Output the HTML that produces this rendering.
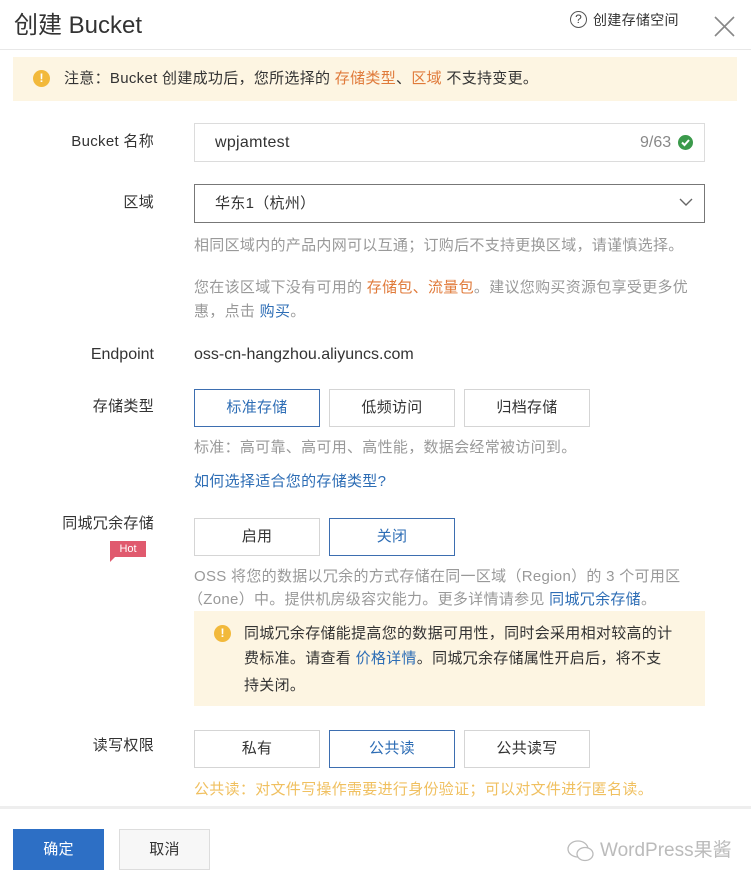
<!DOCTYPE html>
<html><head><meta charset="utf-8"><style>
*{margin:0;padding:0;box-sizing:border-box}
body{width:751px;height:876px;background:#fff;position:relative;overflow:hidden;font-family:"Liberation Sans","Noto Sans CJK SC",sans-serif;color:#333;font-size:15px;letter-spacing:0.3px}
.a{position:absolute;white-space:nowrap}
.lbl{position:absolute;right:597px;white-space:nowrap;font-size:15px;color:#333;line-height:20px}
.btn{position:absolute;height:38px;width:126px;border:1px solid #d5d5d5;background:#fff;text-align:center;line-height:36px;font-size:15px;color:#333}
.sel{border:1px solid #3d6eb0;color:#2d6db5}
.gray{color:#999;font-size:15px;line-height:20px}
.blue{color:#2d6db5}
.org{color:#e07a3a}
.warn{position:absolute;width:17px;height:17px;border-radius:50%;background:#f2b93b;color:#fff;font-size:12px;font-weight:bold;text-align:center;line-height:17px;letter-spacing:0}
</style></head><body>
<div class="a" style="left:14px;top:5px;font-size:24px;color:#333;letter-spacing:0">创建 Bucket</div>
<div class="a" style="left:570px;top:11px;width:17px;height:17px;border:1px solid #555;border-radius:50%;font-size:12px;text-align:center;line-height:15px;color:#444;letter-spacing:0">?</div>
<div class="a" style="left:593px;top:10px;font-size:14px;color:#333">创建存储空间</div>
<svg class="a" style="left:714px;top:16px" width="21" height="21" viewBox="0 0 21 21"><path d="M1 1L20 20M20 1L1 20" stroke="#888" stroke-width="1.6"/></svg>
<div class="a" style="left:0;top:49px;width:751px;height:1px;background:#e8e8e8"></div>
<div class="a" style="left:13px;top:57px;width:724px;height:44px;background:#fdf5e2"></div>
<div class="warn" style="left:33px;top:70px">!</div>
<div class="a" style="left:64px;top:69px;line-height:20px">注意：Bucket 创建成功后，您所选择的 <span class="org">存储类型</span>、<span class="org">区域</span> 不支持变更。</div>

<div class="lbl" style="top:132px">Bucket 名称</div>
<div class="a" style="left:194px;top:123px;width:511px;height:39px;border:1px solid #dcdcdc"></div>
<div class="a" style="left:215px;top:133px;font-size:16px;line-height:20px">wpjamtest</div>
<div class="a" style="left:640px;top:133px;font-size:16px;line-height:20px;color:#888;letter-spacing:0">9/63</div>
<div class="a" style="left:678px;top:135px;width:15px;height:15px;border-radius:50%;background:#3b9a4b"></div>
<svg class="a" style="left:678px;top:135px" width="15" height="15"><path d="M4 7.5L6.5 10L11 5" stroke="#fff" stroke-width="2" fill="none"/></svg>

<div class="lbl" style="top:193px">区域</div>
<div class="a" style="left:194px;top:184px;width:511px;height:39px;border:1px solid #777"></div>
<div class="a" style="left:215px;top:194px;font-size:15px;line-height:20px">华东1（杭州）</div>
<svg class="a" style="left:679px;top:198px" width="14" height="9"><path d="M1 1L7 7L13 1" stroke="#666" stroke-width="1.4" fill="none"/></svg>
<div class="a gray" style="left:194px;top:236px">相同区域内的产品内网可以互通；订购后不支持更换区域，请谨慎选择。</div>
<div class="a gray" style="left:194px;top:278px">您在该区域下没有可用的 <span class="org">存储包、流量包</span>。建议您购买资源包享受更多优</div>
<div class="a gray" style="left:194px;top:302px">惠，点击 <span class="blue">购买</span>。</div>

<div class="lbl" style="top:345px;font-size:16px;letter-spacing:0">Endpoint</div>
<div class="a" style="left:194px;top:345px;font-size:16px;line-height:20px;letter-spacing:0">oss-cn-hangzhou.aliyuncs.com</div>

<div class="lbl" style="top:397px">存储类型</div>
<div class="btn sel" style="left:194px;top:389px">标准存储</div>
<div class="btn" style="left:329px;top:389px">低频访问</div>
<div class="btn" style="left:464px;top:389px">归档存储</div>
<div class="a gray" style="left:194px;top:438px">标准：高可靠、高可用、高性能，数据会经常被访问到。</div>
<div class="a blue" style="left:194px;top:472px;line-height:20px">如何选择适合您的存储类型?</div>

<div class="lbl" style="top:514px">同城冗余存储</div>
<div class="a" style="left:110px;top:541px;width:36px;height:16px;background:#e05a6e;color:#fff;font-size:11px;text-align:center;line-height:16px;letter-spacing:0">Hot</div>
<div class="a" style="left:110px;top:557px;width:0;height:0;border-top:5px solid #e05a6e;border-right:5px solid transparent"></div>
<div class="btn" style="left:194px;top:518px">启用</div>
<div class="btn sel" style="left:329px;top:518px">关闭</div>
<div class="a gray" style="left:194px;top:567px">OSS 将您的数据以冗余的方式存储在同一区域（Region）的 3 个可用区</div>
<div class="a gray" style="left:188px;top:590px">（Zone）中。提供机房级容灾能力。更多详情请参见 <span class="blue">同城冗余存储</span>。</div>
<div class="a" style="left:194px;top:611px;width:511px;height:95px;background:#fdf5e2"></div>
<div class="warn" style="left:214px;top:625px">!</div>
<div class="a" style="left:244px;top:624px;line-height:20px">同城冗余存储能提高您的数据可用性，同时会采用相对较高的计</div>
<div class="a" style="left:244px;top:649px;line-height:20px">费标准。请查看 <span class="blue">价格详情</span>。同城冗余存储属性开启后，将不支</div>
<div class="a" style="left:244px;top:676px;line-height:20px">持关闭。</div>

<div class="lbl" style="top:736px">读写权限</div>
<div class="btn" style="left:194px;top:730px">私有</div>
<div class="btn sel" style="left:329px;top:730px">公共读</div>
<div class="btn" style="left:464px;top:730px">公共读写</div>
<div class="a" style="left:194px;top:780px;color:#f0c060;line-height:20px">公共读：对文件写操作需要进行身份验证；可以对文件进行匿名读。</div>

<div class="a" style="left:0;top:806px;width:751px;height:3px;background:#eee"></div>
<div class="a" style="left:13px;top:829px;width:91px;height:41px;background:#2d6fc5;color:#fff;text-align:center;line-height:41px">确定</div>
<div class="a" style="left:119px;top:829px;width:91px;height:41px;border:1px solid #ddd;background:#f7f7f7;text-align:center;line-height:39px">取消</div>
<svg class="a" style="left:566px;top:838px" width="30" height="26"><ellipse cx="12" cy="11" rx="10" ry="8" fill="none" stroke="#bbb" stroke-width="1.3"/><ellipse cx="19" cy="16" rx="8" ry="6.5" fill="#fff" stroke="#bbb" stroke-width="1.3"/></svg>
<div class="a" style="left:600px;top:839px;font-size:19px;color:#bbb;line-height:24px;letter-spacing:0">WordPress果酱</div>
</body></html>
